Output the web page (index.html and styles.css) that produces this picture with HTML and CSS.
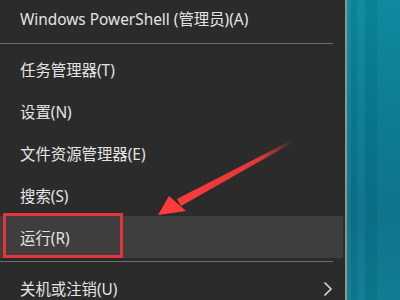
FILE: index.html
```html
<!DOCTYPE html>
<html>
<head>
<meta charset="utf-8">
<link rel="stylesheet" href="styles.css">
</head>
<body>
<div class="screen">
  <div class="menu">
    <div class="item first">Windows PowerShell (管理员)(A)</div>
    <div class="sep"><div class="line"></div></div>
    <div class="item">任务管理器(T)</div>
    <div class="item">设置(N)</div>
    <div class="item">文件资源管理器(E)</div>
    <div class="item">搜索(S)</div>
    <div class="item hover">运行(R)</div>
    <div class="sep bottom"><div class="line"></div></div>
    <div class="item">关机或注销(U)<span class="chev"><svg width="10" height="16" viewBox="0 0 10 16"><path d="M1.5 1.5 L8 8 L1.5 14.5" fill="none" stroke="#d8d8d8" stroke-width="1.6"/></svg></span></div>
  </div>
  <div class="edge"></div>
  <div class="desktop"></div>
  <div class="redbox"></div>
  <svg class="arrow" width="400" height="300" viewBox="0 0 400 300">
    <defs>
      <linearGradient id="fade" x1="290" y1="141" x2="170" y2="205" gradientUnits="userSpaceOnUse">
        <stop offset="0" stop-color="#ff3a3a" stop-opacity="0.1"/>
        <stop offset="0.25" stop-color="#ff3a3a" stop-opacity="0.85"/>
        <stop offset="1" stop-color="#ff3b3b"/>
      </linearGradient>
    </defs>
    <path d="M290 141 L292 143 L181 206 L177 199 Z" fill="url(#fade)"/>
    <path d="M158 215 L169 196 L186 211 Z" fill="#ff3b3b"/>
  </svg>
</div>
</body>
</html>
```
FILE: styles.css
```css
html, body {
  margin: 0;
  padding: 0;
  width: 400px;
  height: 300px;
  overflow: hidden;
  background: #2b2b2b;
}
.screen {
  position: relative;
  width: 400px;
  height: 300px;
  display: flex;
  overflow: hidden;
}
.menu {
  width: 345px;
  flex: none;
  background: #2b2b2b;
  display: flex;
  flex-direction: column;
  font-family: "Noto Sans", "Noto Sans CJK SC", sans-serif;
  font-size: 15.4px;
  color: #e4e4e4;
}
.item {
  height: 42px;
  flex: none;
  display: flex;
  align-items: center;
  padding-left: 20px;
  position: relative;
}
.item.first {
  height: 37px;
}
.item.hover {
  background: #3e3e3e;
  margin-right: 2px;
}
.sep {
  flex: none;
  padding: 6px 0 4px;
}
.sep.bottom {
  padding: 3px 0 5px;
}
.line {
  width: 333px;
  height: 1px;
  background: #6c6c6c;
}
.chev {
  position: absolute;
  left: 323px;
  top: 14px;
  display: flex;
}
.edge {
  width: 2px;
  flex: none;
  background: #8c9496;
}
.desktop {
  flex: 1;
  background:
    linear-gradient(90deg, rgba(255,255,255,0.04) 0 4px, rgba(0,0,0,0.03) 4px 10px, rgba(255,255,255,0.03) 10px 18px, rgba(0,0,0,0.04) 18px 30px, rgba(255,255,255,0.02) 30px 53px),
    linear-gradient(180deg, #0b889c 0%, #087a90 40%, #0a7189 70%, #0c7a90 100%);
}
.redbox {
  position: absolute;
  left: 3px;
  top: 213px;
  width: 114px;
  height: 39px;
  border: 3px solid #e5343a;
}
.arrow {
  position: absolute;
  left: 0;
  top: 0;
}
```
